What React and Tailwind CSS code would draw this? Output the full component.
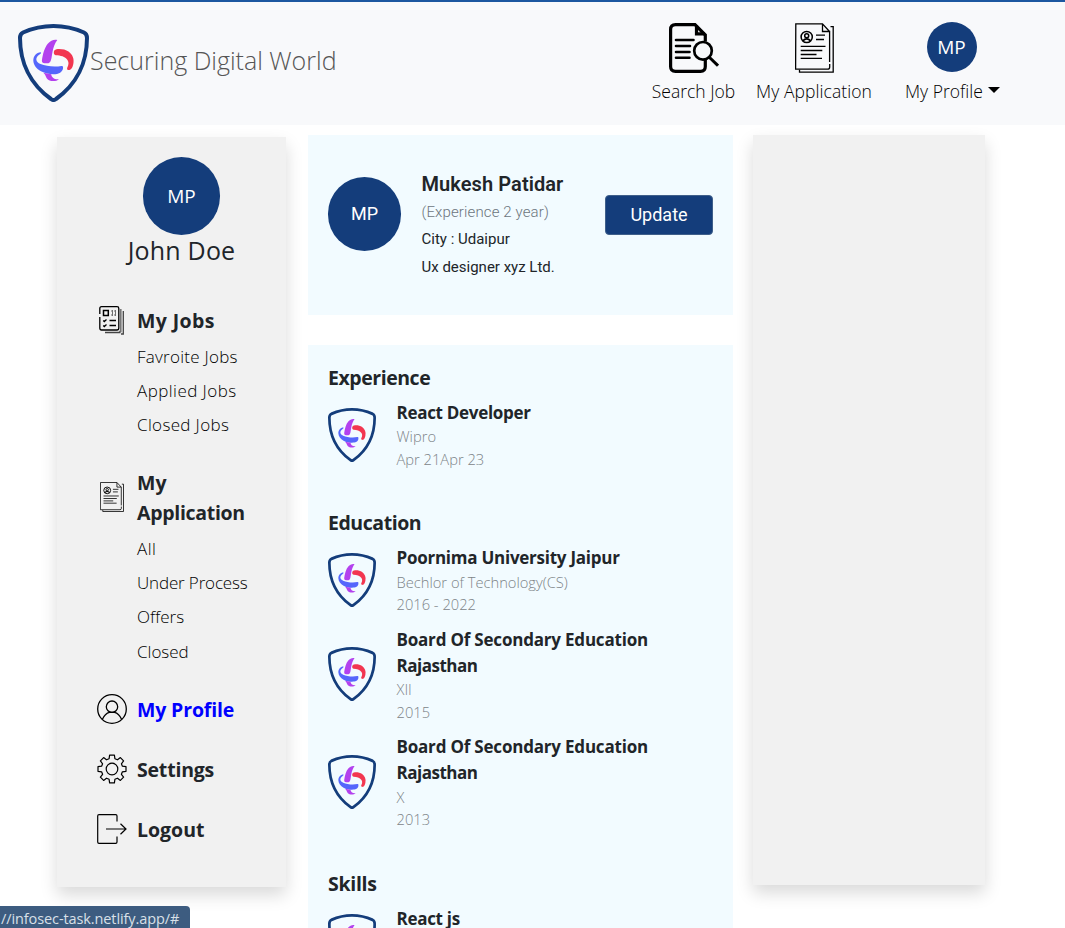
function Shield({ className }) {
  return (
    <svg viewBox="0 0 71 78" preserveAspectRatio="none" className={className} fill="none">
      <path d="M35.5 2C25 2 14 4.5 5 8.5Q2 10 2 14C2 38 12 60 33 75Q35.5 77 38 75C59 60 69 38 69 14Q69 10 66 8.5C57 4.5 46 2 35.5 2Z" stroke="#143d7b" strokeWidth="4" />
      <path d="M39.3 16C35.500 15.300 32.500 16.800 30 19.500C26.500 23.500 24.800 30 23.900 36.500Q23.800 39.200 26.500 39.200H30.500Q32.300 39 33 36C34.500 31.500 33.800 23.500 39.300 16Z" fill="#b341ee" />
      <path d="M38.500 25.200C43 24.700 47.500 25.500 50.500 27.500C54.500 30.300 56.500 35 55.300 40C54.700 43 53.500 45.500 51.500 46C49.800 46.300 48.500 45.500 49.300 43.500C50.500 41 51.200 38.500 49.500 36C47 32.500 42.500 31.500 38 31.300C35 31 35 25.700 38.500 25.200Z" fill="#f23650" />
      <path d="M22.700 28.200C18.500 28.200 15.300 32 15.300 36.500C15.500 41 18.500 45 23 47.300C28 50 34 50.600 39 50C43 49.300 45.500 46 45 42.800Q44.800 41.800 43.500 42C36 43.200 28 42.300 22.500 40C17.700 38 17.300 34.500 20 31.800C21.500 30.300 24.200 29.200 22.700 28.200Z" fill="#5566fc" />
      <path d="M25.300 48.800L33.300 50.200C33.300 53.300 36.500 55.800 41 55.200C38.500 57.500 34 57.500 31 56.200C27.700 54.800 28.500 51.500 25.300 48.800Z" fill="#b341ee" />
    </svg>
  );
}

function SearchDoc() {
  return (
    <svg viewBox="0 0 50 50" className="h-[50px] w-[50px]" fill="none" stroke="#000">
      <path d="M36.300 18.500V12L26 1.600H6.500Q1.600 1.600 1.600 6.500V43.500Q1.600 48.400 6.500 48.400H31.500Q36.300 48.400 36.300 43.500V37" strokeWidth="3.200" />
      <path d="M27.500 2.500V10.800H36" strokeWidth="3.200" />
      <path d="M7 17H24.500M7 23H21M7 29H20.500M7 34.700H20.500" strokeWidth="2.600" strokeLinecap="round" />
      <circle cx="34" cy="27.800" r="8.800" strokeWidth="2.700" />
      <path d="M40.300 34.200L49 42.700" strokeWidth="3" />
    </svg>
  );
}

function ResumeIcon({ className }) {
  return (
    <svg viewBox="0 0 39 50" preserveAspectRatio="none" className={className} fill="none" stroke="#000" strokeWidth="1.300">
      <path d="M34.500 8.500L27.500 .8H.8L.6 46.200H32.500Q34.700 46.200 34.700 44V41M34.600 39V8.500H27.500V1" />
      <path d="M35.500 3.600H38.200V49.200H4.500V46.800" />
      <circle cx="11.700" cy="14" r="5.600" strokeWidth="1.500" />
      <circle cx="11.700" cy="12.800" r="2" strokeWidth="1.500" />
      <path d="M7.800 17.800Q11.700 14 15.600 17.800" strokeWidth="1.800" />
      <path d="M21 12.200H30M21 16.500H29M5.700 23.300H30.500M5.700 27.500H27.300M5.700 31.500H21.500M5.700 35.300H27" />
    </svg>
  );
}

function JobsIcon() {
  return (
    <svg viewBox="0 0 25 29" className="h-[29px] w-[25px]" fill="none" stroke="#000" strokeWidth="1.300">
      <path d="M.8 8V2.500Q.8 .7 2.500 .7H18Q19.800 .7 19.800 2.500V22Q19.800 24 18 24H2.500Q.8 24 .8 22V11" />
      <path d="M21.800 3V25.500H20" stroke="#777" strokeWidth="1.600" />
      <path d="M24.300 5V28H22M6 26.500H21.500" stroke="#444" strokeWidth="1.300" />
      <rect x="4.500" y="4.500" width="4.800" height="5" strokeWidth="1.500" />
      <path d="M12.500 5H14M15.500 5H17M12.500 9H14M15.500 9H17M13 7H14M16 7H17" stroke="#444" />
      <path d="M4.200 14.500L5.300 15.500L7.500 13.500M10.500 14.500H17M4.200 19.500L5.300 20.500L7.500 18.500M10.500 19.500H17" />
    </svg>
  );
}

function UserIcon() {
  return (
    <svg viewBox="0 0 30 30" className="h-[30px] w-[30px]" fill="none" stroke="#000" strokeWidth="1.300">
      <circle cx="15" cy="15" r="14.300" />
      <circle cx="15" cy="12.700" r="5.700" />
      <path d="M5.300 25.500C7 21.500 10 18.800 12.500 18.300H17.500C20 18.800 23 21.500 24.700 25.500" />
    </svg>
  );
}

function GearIcon() {
  return (
    <svg viewBox="0 0 30 30" className="h-[30px] w-[30px]" fill="none" stroke="#000" strokeWidth="1.200" strokeLinejoin="round">
      <path d="M12.600 1.200H17.400L17.900 4.700L20.500 5.800L23.400 3.600L26.600 6.900L24.400 9.800L25.400 12.200L29 12.700V17.300L25.400 17.800L24.400 20.300L26.600 23.200L23.400 26.400L20.500 24.200L17.900 25.300L17.400 28.800H12.600L12.100 25.300L9.500 24.200L6.600 26.400L3.400 23.200L5.600 20.300L4.600 17.800L1 17.300V12.700L4.600 12.200L5.600 9.800L3.400 6.900L6.600 3.600L9.500 5.800L12.100 4.700Z" />
      <circle cx="15" cy="15" r="5.800" />
    </svg>
  );
}

function LogoutIcon() {
  return (
    <svg viewBox="0 0 30 30" className="h-[30px] w-[30px]" fill="none" stroke="#000" strokeWidth="1.200">
      <path d="M20 7.500V2Q20 .7 18.700 .7H2Q.7 .7 .7 2V28Q.7 29.300 2 29.300H18.700Q20 29.300 20 28V22.500" />
      <path d="M9 15H29M23.500 9.800L29 15L23.500 20.200" />
    </svg>
  );
}

const navText = "text-[17.500px] leading-[24px] font-light whitespace-nowrap text-black";
const head = "text-[19.500px] font-bold whitespace-nowrap leading-[30px] text-[#212529]";
const sub = "block text-[17px] font-light leading-[34.200px] whitespace-nowrap text-black";
const title = "h-[26px] text-[17px] font-bold leading-[26px] whitespace-nowrap text-[#212529]";
const muted = "h-[22.700px] text-[14.700px] font-light leading-[23px] whitespace-nowrap text-[#7d8488]";

function Entry({ lines, details, className }) {
  return (
    <div className={`flex items-center gap-[20.500px] ${className}`}>
      <Shield className="-mt-px h-[54px] w-12 shrink-0" />
      <div>
        {lines.map(([text, tracking]) => (
          <div key={text} className={`${title} ${tracking}`}>{text}</div>
        ))}
        <div className="-mt-[0.600px] -mb-[0.400px]">
          {details.map((text) => <div key={text} className={muted}>{text}</div>)}
        </div>
      </div>
    </div>
  );
}

function MenuHead({ icon, children, className }) {
  return (
    <div className={`flex h-[30px] items-center ${className}`}>
      <div className="w-[40px]">{icon}</div>
      <span className={`${head} mt-px`}>{children}</span>
    </div>
  );
}

const board = ["Board Of Secondary Education", "tracking-[-0.200px]"];
const rajasthan = ["Rajasthan", "tracking-[-0.500px]"];

export default function App() {
  return (
    <div className="relative h-[928px] w-[1065px] overflow-hidden bg-white font-['Open_Sans','Noto_Sans',sans-serif]">
      <header className="flex h-[125px] items-start border-t-2 border-[#1c57a0] bg-[#f8f9fb]">
        <div className="flex items-start pt-[22px] pl-[18px]">
          <Shield className="h-[78px] w-[71px]" />
          <span className="mt-[17px] ml-px text-[25px] leading-[38px] font-light whitespace-nowrap text-[#555]">Securing Digital World</span>
        </div>
        <nav className="ml-auto flex pt-[21px] pr-[65px]">
          <div className="flex w-[83px] flex-col items-center">
            <SearchDoc />
            <span className={`${navText} mt-[6px]`}>Search Job</span>
          </div>
          <div className="ml-[21px] flex w-[116px] flex-col items-center">
            <ResumeIcon className="h-[50px] w-[39px]" />
            <span className={`${navText} mt-[6px] tracking-[0.080px]`}>My Application</span>
          </div>
          <div className="-mt-px ml-[33px] flex w-[95px] flex-col items-center">
            <div className="mr-0.5 flex size-[50px] items-center justify-center rounded-full bg-[#143d7b] text-[19px] text-white">MP</div>
            <div className="mt-[7px] flex w-full items-center justify-between">
              <span className={navText}>My Profile</span>
              <svg viewBox="0 0 12 6" className="-mt-0.5 h-[6px] w-3"><path d="M0 0H12L6 6Z" /></svg>
            </div>
          </div>
        </nav>
      </header>
      <main className="flex items-start pl-[57px]">
        <aside className="mt-3 h-[750px] w-[229px] bg-[#f1f1f1] pt-5 shadow-[0_8px_16px_rgba(0,0,0,0.15)]">
          <div className="flex flex-col items-center pl-[20px]">
            <div className="flex h-[78px] w-[77px] items-center justify-center rounded-full bg-[#143d7b] text-[19px] text-white">MP</div>
            <span className="-mt-px mb-px text-[25px] leading-[32px] tracking-[0.200px] whitespace-nowrap text-[#212529]">John Doe</span>
          </div>
          <div className="pl-10">
            <div className="mt-[39px] flex h-[30px] items-center">
              <div className="-mt-0.5 w-[40px] pl-[2px]"><JobsIcon /></div>
              <span className={`${head} tracking-[0.400px]`}>My Jobs</span>
            </div>
            <div className="mt-[4px] pl-10">
              <span className={`${sub} tracking-[0.250px]`}>Favroite Jobs</span>
              <span className={`${sub} tracking-[0.450px]`}>Applied Jobs</span>
              <span className={`${sub} tracking-[0.350px]`}>Closed Jobs</span>
            </div>
            <div className="mt-[25px] flex h-[60px] items-center">
              <div className="-mt-0.5 w-[40px] pl-[3px]"><ResumeIcon className="h-[30px] w-[24px]" /></div>
              <div className="flex flex-col">
                <span className={head}>My</span>
                <span className={`${head} tracking-[-0.300px]`}>Application</span>
              </div>
            </div>
            <div className="mt-[4.400px] mb-[25.600px] pl-10">
              <span className={`${sub} tracking-[0.500px]`}>All</span>
              <span className={`${sub} tracking-[-0.150px]`}>Under Process</span>
              <span className={sub}>Offers</span>
              <span className={sub}>Closed</span>
            </div>
            <MenuHead icon={<UserIcon />}><span className="tracking-[-0.150px] text-[#0000ff]">My Profile</span></MenuHead>
            <MenuHead icon={<GearIcon />} className="mt-[30px]"><span className="tracking-[-0.200px]">Settings</span></MenuHead>
            <MenuHead icon={<LogoutIcon />} className="mt-[30px]">Logout</MenuHead>
          </div>
        </aside>
        <section className="mt-[10px] ml-[22px] w-[425px]">
          <div className="flex h-[180px] bg-[#f2fbff] px-5 font-[Roboto,sans-serif]">
            <div className="mt-[42px] flex h-[74px] w-[73px] items-center justify-center rounded-full bg-[#143d7b] pb-px text-[18px] text-white">MP</div>
            <div className="mt-[35px] ml-[20.500px] flex flex-col items-start text-[#212529]">
              <span className="text-[20px] leading-[28px] font-semibold tracking-[0.080px]">Mukesh Patidar</span>
              <span className="mt-[0.700px] text-[15px] leading-[27.500px] font-light tracking-[0.130px] text-[#6c757d]">(Experience 2 year)</span>
              <span className="text-[15px] leading-[27.500px]">City : Udaipur</span>
              <span className="text-[15px] leading-[27.500px]">Ux designer xyz Ltd.</span>
            </div>
            <button className="mt-[60px] ml-auto h-[40px] w-[108px] rounded border border-[#3f5f8a] bg-[#143d7b] text-[18px] leading-[24px] font-[450] text-white">Update</button>
          </div>
          <div className="mt-[30px] h-[700px] bg-[#f2fbff] px-5 pt-[18px]">
            <h2 className={`${head} h-[30px] tracking-[-0.450px]`}>Experience</h2>
            <Entry className="mt-[7px]" lines={[["React Developer", "tracking-[-0.300px]"]]} details={["Wipro", "Apr 21Apr 23"]} />
            <h2 className={`${head} mt-[38px] h-[30px] tracking-[-0.450px]`}>Education</h2>
            <Entry className="mt-[7px]" lines={[["Poornima University Jaipur", "tracking-[-0.250px]"]]} details={["Bechlor of Technology(CS)", "2016 - 2022"]} />
            <Entry className="mt-[11px]" lines={[board, rajasthan]} details={["XII", "2015"]} />
            <Entry className="mt-[11px]" lines={[board, rajasthan]} details={["X", "2013"]} />
            <h2 className={`${head} mt-[38px] h-[30px] tracking-[-0.300px]`}>Skills</h2>
            <div className="mt-[7px] flex items-start gap-[20.500px]">
              <Shield className="mt-[8px] h-[54px] w-12 shrink-0" />
              <div className={`${title} tracking-[-0.300px]`}>React js</div>
            </div>
          </div>
        </section>
        <aside className="mt-[10px] ml-5 h-[750px] w-[232px] bg-[#f1f1f1] shadow-[0_8px_16px_rgba(0,0,0,0.15)]" />
      </main>
      <div className="absolute bottom-0 left-0 flex h-[22px] w-[190px] items-center rounded-tr bg-[#3d5c80] pl-px text-[#d9e0e8]">
        <span className="mt-[4px] text-[14.500px] leading-[18px] tracking-[-0.100px] whitespace-nowrap">//infosec-task.netlify.app/#</span>
      </div>
    </div>
  );
}
